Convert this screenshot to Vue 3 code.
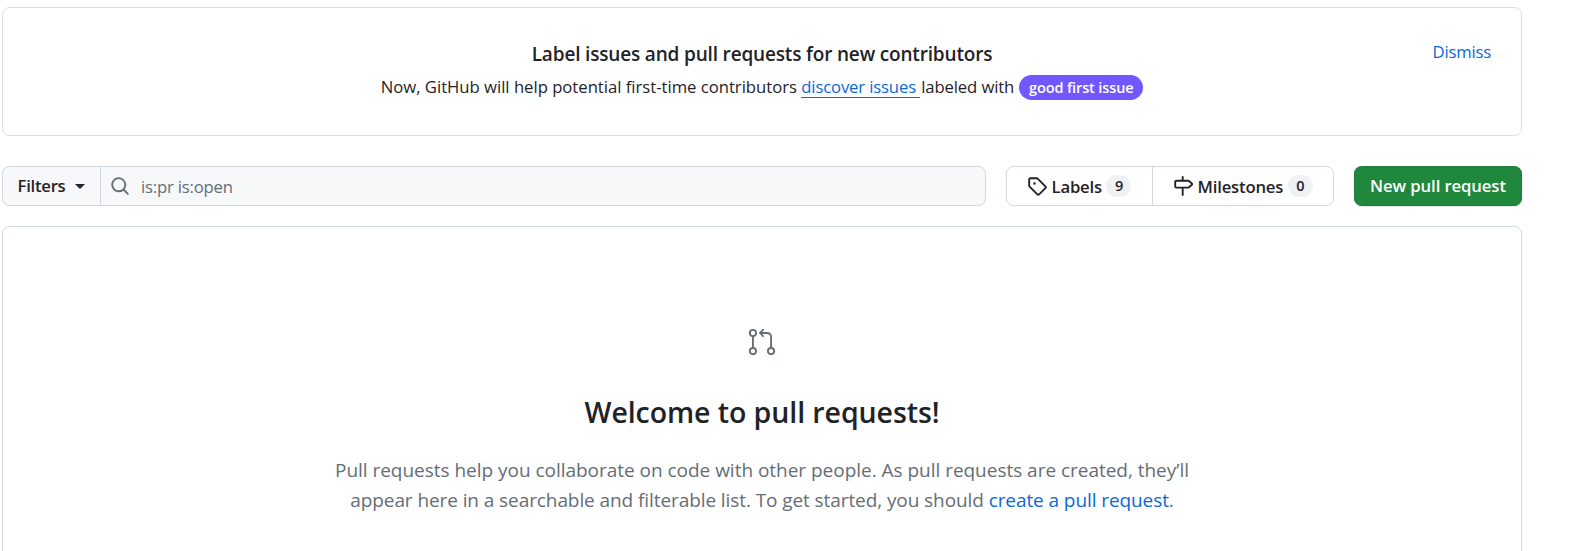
<script setup>
const tabs = [
  {
    name: 'Labels',
    count: 9,
    icon: 'M1 7.775V2.75C1 1.784 1.784 1 2.75 1h5.025c.464 0 .91.184 1.238.513l6.25 6.25a1.75 1.75 0 0 1 0 2.474l-5.026 5.026a1.75 1.75 0 0 1-2.474 0l-6.25-6.25A1.752 1.752 0 0 1 1 7.775Zm1.5 0c0 .066.026.13.073.177l6.25 6.25a.25.25 0 0 0 .354 0l5.025-5.025a.25.25 0 0 0 0-.354l-6.25-6.25a.25.25 0 0 0-.177-.073H2.75a.25.25 0 0 0-.25.25ZM6 5a1 1 0 1 1 0 2 1 1 0 0 1 0-2Z',
  },
  {
    name: 'Milestones',
    count: 0,
    icon: 'M7.75 0a.75.75 0 0 1 .75.75V3h3.634c.414 0 .814.147 1.13.414l2.07 1.75a1.75 1.75 0 0 1 0 2.672l-2.07 1.75a1.75 1.75 0 0 1-1.13.414H8.5v5.25a.75.75 0 0 1-1.5 0V10H2.75A1.75 1.75 0 0 1 1 8.25v-3.5C1 3.784 1.784 3 2.75 3H7V.75A.75.75 0 0 1 7.75 0Zm4.384 8.5a.25.25 0 0 0 .161-.06l2.07-1.75a.248.248 0 0 0 0-.38l-2.07-1.75a.25.25 0 0 0-.161-.06H2.75a.25.25 0 0 0-.25.25v3.5c0 .138.112.25.25.25h9.384Z',
  },
]
</script>

<template>
  <main class="page">
    <section class="notice">
      <div class="notice-body">
        <h3>Label issues and pull requests for new contributors</h3>
        <p class="notice-text">
          <span class="lead">Now, GitHub will help potential first-time contributors&nbsp;</span>
          <a class="discover">discover issues&nbsp;</a>
          <span class="tail">labeled with</span>
          <span class="issue-label">good first issue</span>
        </p>
      </div>
      <a class="dismiss">Dismiss</a>
    </section>

    <div class="toolbar">
      <div class="search">
        <button class="filters">Filters<i class="caret"></i></button>
        <div class="field">
          <svg width="20" height="20" viewBox="0 0 16 16"><path d="M10.68 11.74a6 6 0 0 1-7.922-8.982 6 6 0 0 1 8.982 7.922l3.04 3.04a.749.749 0 0 1-.326 1.275.749.749 0 0 1-.734-.215ZM11.5 7a4.499 4.499 0 1 0-8.997 0A4.499 4.499 0 0 0 11.5 7Z" /></svg>
          <span>is:pr is:open</span>
        </div>
      </div>
      <nav class="tabs">
        <a v-for="tab in tabs" :key="tab.name">
          <svg width="20" height="20" viewBox="0 0 16 16"><path :d="tab.icon" /></svg>
          <span class="tab-name">{{ tab.name }}</span>
          <span class="count">{{ tab.count }}</span>
        </a>
      </nav>
      <button class="create">New pull request</button>
    </div>

    <section class="blank">
      <svg width="30" height="30" viewBox="0 0 24 24">
        <path d="M16 19.25a3.25 3.25 0 1 1 6.5 0 3.25 3.25 0 0 1-6.5 0Zm-14.5 0a3.25 3.25 0 1 1 6.5 0 3.25 3.25 0 0 1-6.5 0Zm0-14.5a3.25 3.25 0 1 1 6.5 0 3.25 3.25 0 0 1-6.5 0ZM4.75 3a1.75 1.75 0 1 0 .001 3.501A1.75 1.75 0 0 0 4.75 3Zm0 14.5a1.75 1.75 0 1 0 .001 3.501A1.75 1.75 0 0 0 4.75 17.5Zm14.5 0a1.75 1.75 0 1 0 .001 3.501 1.75 1.75 0 0 0-.001-3.501Z" />
        <path d="M13.405 1.72a.75.75 0 0 1 0 1.06L12.185 4h4.065A3.75 3.75 0 0 1 20 7.75v8.75a.75.75 0 0 1-1.5 0V7.75a2.25 2.25 0 0 0-2.25-2.25h-4.064l1.22 1.22a.75.75 0 0 1-1.061 1.06l-2.5-2.5a.75.75 0 0 1 0-1.06l2.5-2.5a.75.75 0 0 1 1.06 0ZM4.75 7.25A.75.75 0 0 1 5.5 8v8A.75.75 0 0 1 4 16V8a.75.75 0 0 1 .75-.75Z" />
      </svg>
      <h2>Welcome to pull requests!</h2>
      <p class="first">Pull requests help you collaborate on code with other people. As pull requests are created, they’ll</p>
      <p class="second">appear here in a searchable and filterable list. To get started, you should <a>create a pull request</a>.</p>
    </section>
  </main>
</template>

<style>
body {
  background: #fff;
  overflow: hidden;
}
</style>

<style scoped>
.page {
  box-sizing: border-box;
  width: 1571px;
  height: 551px;
  padding: 7px 49px 0 2px;
  overflow: hidden;
  display: flex;
  flex-direction: column;
  color: #1f2328;
  font-family: "Open Sans", "Noto Sans", sans-serif;
  font-size: 16.7px;
  line-height: 25px;
  white-space: nowrap;
}
.page * {
  box-sizing: border-box;
}
h2, h3, p {
  margin: 0;
}
a {
  color: #0969da;
  text-decoration: none;
}
svg {
  display: block;
  flex: none;
  fill: currentColor;
}
button {
  font: inherit;
  color: inherit;
  margin: 0;
}
.notice {
  display: grid;
  grid-template-columns: 1fr auto 1fr;
  flex: none;
  height: 129px;
  padding: 31px 30px 0;
  border: 1px solid #d8dee4;
  border-radius: 7.5px;
}
.notice-body {
  grid-column: 2;
}
h3 {
  font-size: 19px;
  font-weight: 600;
  line-height: 30px;
  letter-spacing: -0.17px;
  text-align: center;
}
.notice-text {
  display: flex;
  margin-top: 5px;
}
.lead {
  letter-spacing: -0.02px;
}
.discover {
  height: 24px;
  letter-spacing: -0.15px;
  border-bottom: 1px solid #0969da;
}
.tail {
  margin-left: 1px;
  letter-spacing: -0.12px;
}
.issue-label {
  margin: 1px 0 0 5px;
  width: 124px;
  height: 25px;
  border-radius: 13px;
  background: #7057ff;
  color: #fff;
  font-size: 14.5px;
  font-weight: 600;
  line-height: 25px;
  letter-spacing: -0.12px;
  text-align: center;
}
.dismiss {
  justify-self: end;
  letter-spacing: -0.2px;
}
.toolbar {
  display: flex;
  flex: none;
  height: 40px;
  gap: 20px;
  margin-top: 30px;
}
.search {
  display: flex;
  flex: 1;
  border: 1px solid #d0d7de;
  border-radius: 7.5px;
  background: #f6f8fa;
}
.filters {
  display: flex;
  align-items: center;
  width: 98px;
  padding: 0 0 1px 14.5px;
  border: 0;
  border-right: 1px solid #d0d7de;
  background: none;
  font-weight: 600;
  letter-spacing: -0.25px;
}
.caret {
  margin: 2px 0 0 9.5px;
  border: 5px solid transparent;
  border-top-color: currentColor;
  border-bottom: 0;
}
.field {
  display: flex;
  align-items: center;
  gap: 11px;
  padding-left: 9px;
  color: #656d76;
  letter-spacing: -0.2px;
}
.tabs {
  display: flex;
  width: 328px;
  border: 1px solid #d0d7de;
  border-radius: 7.5px;
}
.tabs a {
  display: flex;
  align-items: center;
  flex: 1;
  padding-left: 20px;
  color: #1f2328;
  font-weight: 600;
  letter-spacing: -0.18px;
}
.tabs a:first-child {
  flex: 0 0 146px;
  border-right: 1px solid #d0d7de;
}
.tab-name {
  margin: 0 4.5px;
}
.count {
  width: 25px;
  height: 22px;
  border-radius: 11px;
  background: #eff1f3;
  font-size: 14.5px;
  line-height: 22px;
  text-align: center;
}
.create {
  width: 168px;
  padding: 0 0 1px;
  border: 1px solid #1d7c39;
  border-radius: 7.5px;
  background: #1f883d;
  box-shadow: 0 1px 0 rgba(31, 35, 40, 0.1);
  color: #fff;
  font-weight: 600;
  letter-spacing: -0.1px;
}
.blank {
  display: flex;
  flex-direction: column;
  align-items: center;
  flex: none;
  height: 360px;
  margin-top: 20px;
  padding-top: 100px;
  border: 1px solid #d0d7de;
  border-radius: 7.5px;
  color: #656d76;
  font-size: 19px;
  line-height: 30px;
}
h2 {
  margin: 33px 0 20px;
  color: #1f2328;
  font-size: 28.5px;
  font-weight: 600;
  line-height: 45px;
  letter-spacing: -0.08px;
}
.first {
  letter-spacing: -0.025px;
}
.second {
  letter-spacing: -0.085px;
}
</style>
